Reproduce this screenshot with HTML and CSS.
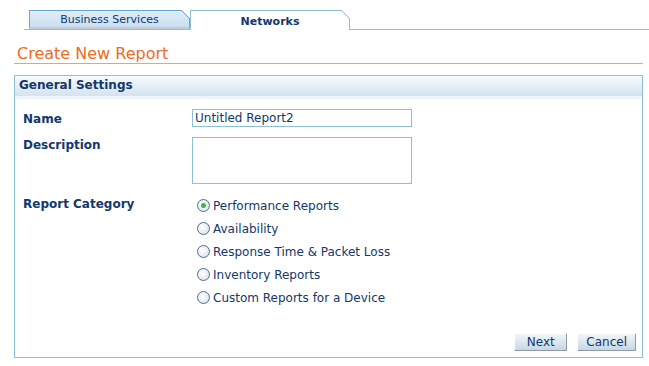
FILE: index.html
```html
<!DOCTYPE html>
<html lang="en">
<head>
    <meta charset="UTF-8">
    <title>Create New Report</title>
    <link rel="stylesheet" href="styles.css">
</head>
<body>
    <div class="tabs">
        <div class="tab">Business Services</div>
        <div class="tab active">Networks</div>
    </div>

    <h1 class="page-title">Create New Report</h1>

    <div class="panel">
        <div class="panel-head">General Settings</div>
        <div class="panel-body">
            <div class="row">
                <label class="field-label middle" for="name">Name</label>
                <input type="text" id="name" class="text-input" value="Untitled Report2">
            </div>
            <div class="row row-tall">
                <label class="field-label" for="desc">Description</label>
                <textarea id="desc" class="text-area"></textarea>
            </div>
            <div class="row">
                <span class="field-label">Report Category</span>
                <div class="options">
                    <label class="option"><span class="radio checked"></span>Performance Reports</label>
                    <label class="option"><span class="radio"></span>Availability</label>
                    <label class="option"><span class="radio"></span>Response Time &amp; Packet Loss</label>
                    <label class="option"><span class="radio"></span>Inventory Reports</label>
                    <label class="option"><span class="radio"></span>Custom Reports for a Device</label>
                </div>
            </div>
            <div class="actions">
                <button class="btn">Next</button>
                <button class="btn">Cancel</button>
            </div>
        </div>
    </div>
</body>
</html>
```
FILE: styles.css
```css
body {
    margin: 0;
    font-family: "DejaVu Sans", Verdana, sans-serif;
    font-size: 12px;
    color: #12386b;
    background: #fff;
}

/* tabs */
.tabs {
    display: flex;
    align-items: flex-end;
    margin: 10px 0 0 24px;
    padding-left: 5px;
    height: 19px;
    font-size: 11px;
    border-bottom: 1px solid #8cc0d6;
}

.tab {
    position: relative;
    box-sizing: border-box;
    width: 161px;
    height: 19px;
    text-align: center;
    line-height: 17px;
    border: 1px solid #64a5dc;
    border-bottom: 2px solid #c4c9d2;
    background: linear-gradient(#e0edf9, #c9def1);
}

.tab::after {
    content: "";
    position: absolute;
    top: -1px;
    right: -1px;
    width: 9px;
    height: 9px;
    background: linear-gradient(to top right, transparent calc(50% - 0.8px), #64a5dc 50%, #fff calc(50% + 0.8px));
}

.tab.active {
    width: 160px;
    height: 20px;
    margin-bottom: -1px;
    border-color: #8cc0d6;
    border-bottom: none;
    background: #fff;
    font-weight: bold;
    line-height: 22px;
}

.tab.active::after {
    background: linear-gradient(to top right, transparent calc(50% - 0.8px), #8cc0d6 50%, #fff calc(50% + 0.8px));
}

/* title */
.page-title {
    margin: 15px 6px 0 14px;
    padding: 0 0 0 3px;
    font-size: 16px;
    font-weight: normal;
    color: #f26a22;
    border-bottom: 1px solid #8cc0d6;
    line-height: 18px;
}

/* panel */
.panel {
    margin: 11px 6px 0 14px;
    height: 283px;
    box-sizing: border-box;
    border: 1px solid #8cc0d6;
    display: flex;
    flex-direction: column;
}

.panel-head {
    height: 20px;
    padding-left: 4px;
    line-height: 18px;
    font-size: 12px;
    font-weight: bold;
    background: linear-gradient(#f6fbff, #d4e3ed);
    border-bottom: 3px solid #eef4f8;
}

.panel-body {
    flex: 1;
    display: flex;
    flex-direction: column;
    padding: 10px 6px 6px 8px;
}

.row {
    display: grid;
    grid-template-columns: 169px 220px;
    margin-bottom: 10px;
}

.row-tall {
    margin-bottom: 12px;
}

.field-label {
    font-weight: bold;
    padding-top: 1px;
}

.field-label.middle {
    padding-top: 3px;
}

.text-input,
.text-area {
    box-sizing: border-box;
    width: 220px;
    border: 1px solid #8cc0d6;
    font: inherit;
    color: inherit;
    margin: 0;
}

.text-input {
    height: 18px;
    padding: 0 2px;
}

.text-area {
    height: 47px;
    resize: none;
}

.options {
    display: flex;
    flex-direction: column;
    gap: 8px;
    padding-left: 5px;
    padding-top: 2px;
}

.option {
    display: flex;
    align-items: center;
    gap: 3px;
    height: 15px;
    white-space: nowrap;
}

.radio {
    box-sizing: border-box;
    width: 13px;
    height: 13px;
    border-radius: 50%;
    border: 1px solid #4e6e90;
    background: radial-gradient(circle at 40% 40%, #fff, #d6dde6);
    display: flex;
    align-items: center;
    justify-content: center;
}

.radio.checked::before {
    content: "";
    width: 5px;
    height: 5px;
    border-radius: 50%;
    background: #3fb540;
}

.actions {
    margin-top: auto;
    display: flex;
    justify-content: flex-end;
    gap: 10px;
}

.btn {
    height: 18px;
    padding: 0 8px;
    min-width: 53px;
    font: inherit;
    font-size: 12px;
    color: #12386b;
    border: 1px solid;
    border-color: #fff #8d9aa8 #8d9aa8 #fff;
    background: linear-gradient(#f1f5f9, #c8d6e3);
    cursor: pointer;
}
```
